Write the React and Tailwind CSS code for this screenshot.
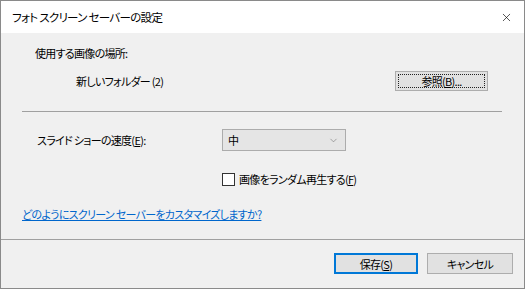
import { X, ChevronDown } from "lucide-react";

const font = "font-['Noto_Sans_CJK_JP','Noto_Sans',sans-serif] [font-feature-settings:'palt'] tracking-[-0.7px]";

export default function App() {
  return (
    <div className={`w-[525px] h-[289px] flex flex-col border border-[#8a8a8a] bg-[#f0f0f0] text-[11px] text-black ${font}`}>
      {/* title bar */}
      <div className="h-[32px] bg-white flex items-center justify-between pl-[11px] pr-[11px] shrink-0">
        <span className="leading-[16px] text-[11.5px]">フォト スクリーン セーバーの設定</span>
        <X className="w-[13px] h-[13px] text-black" strokeWidth={1.2} />
      </div>

      {/* content */}
      <div className="flex-1 flex flex-col pl-[21px] pr-[22px] pt-[12px]">
        <div className="pl-[13px] leading-[16px]">使用する画像の場所:</div>

        <div className="flex items-center justify-between mt-[10px] pl-[54px] pr-[14px]">
          <span className="leading-[16px]">新しいフォルダー (2)</span>
          <button className="w-[93px] h-[20px] border border-[#adadad] bg-[#e1e1e1] p-[2px]">
            <span className="flex items-center justify-center w-full h-full border border-dotted border-[#222] leading-[14px]">
              参照(<span className="underline">B</span>)...
            </span>
          </button>
        </div>

        <div className="h-px bg-[#a0a0a0] mt-[20px]" />

        <div className="flex items-center mt-[17px]">
          <span className="w-[200px] pl-[15px] leading-[16px]">
            スライド ショーの速度(<span className="underline">E</span>):
          </span>
          <div className="w-[124px] h-[22px] border border-[#acacac] bg-[#e5e5e5] flex items-center justify-between pl-[5px] pr-[6px]">
            <span className="leading-[16px]">中</span>
            <ChevronDown className="w-[11px] h-[11px] text-[#666]" strokeWidth={1.2} />
          </div>
        </div>

        <div className="flex items-center mt-[20px] pl-[200px]">
          <span className="w-[13px] h-[13px] border border-[#333] bg-white" />
          <span className="ml-[4px] leading-[16px]">
            画像をランダム再生する(<span className="underline">F</span>)
          </span>
        </div>

        <div className="mt-[19px] leading-[16px]">
          <a className="text-[#0066cc] underline">どのようにスクリーン セーバーをカスタマイズしますか?</a>
        </div>
      </div>

      {/* footer */}
      <div className="h-[49px] border-t border-[#a0a0a0] flex items-start justify-end pt-[13px] pr-[11px] gap-[9px] shrink-0">
        <button className="w-[84px] h-[21px] border-2 border-[#0078d7] bg-[#e1e1e1] flex items-center justify-center leading-[14px]">
          保存(<span className="underline">S</span>)
        </button>
        <button className="w-[86px] h-[21px] border border-[#adadad] bg-[#e1e1e1] flex items-center justify-center leading-[14px]">
          キャンセル
        </button>
      </div>
    </div>
  );
}
